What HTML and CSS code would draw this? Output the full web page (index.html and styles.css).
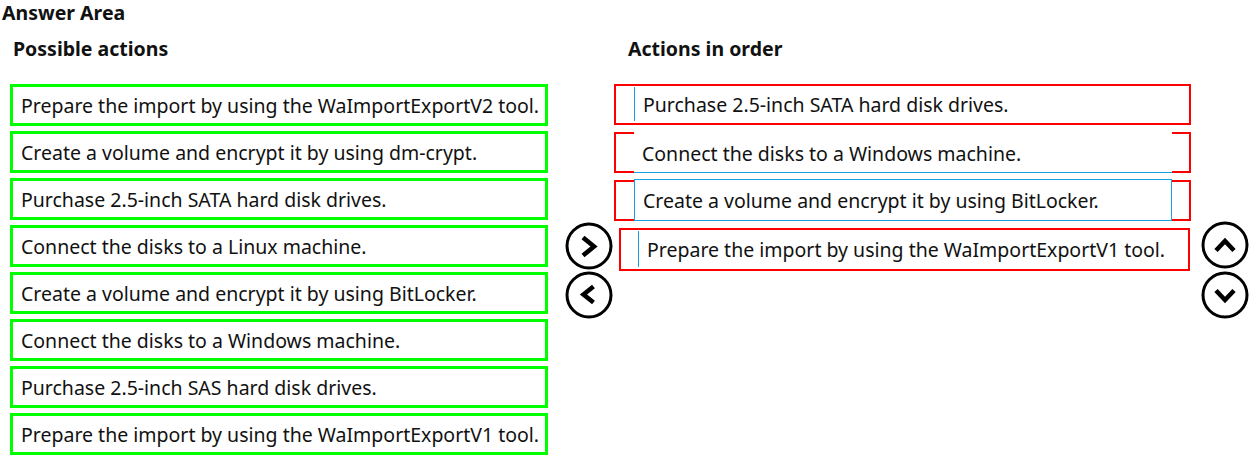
FILE: index.html
```html
<!DOCTYPE html>
<html>
<head>
<meta charset="utf-8">
<link rel="stylesheet" href="styles.css">
</head>
<body>
<h1 class="title">Answer Area</h1>
<div class="board">
  <h2 class="heading heading-left">Possible actions</h2>
  <div></div>
  <h2 class="heading heading-right">Actions in order</h2>
  <div></div>

  <div class="source-list">
    <div class="src">Prepare the import by using the WaImportExportV2 tool.</div>
    <div class="src">Create a volume and encrypt it by using dm-crypt.</div>
    <div class="src">Purchase 2.5-inch SATA hard disk drives.</div>
    <div class="src">Connect the disks to a Linux machine.</div>
    <div class="src">Create a volume and encrypt it by using BitLocker.</div>
    <div class="src">Connect the disks to a Windows machine.</div>
    <div class="src">Purchase 2.5-inch SAS hard disk drives.</div>
    <div class="src">Prepare the import by using the WaImportExportV1 tool.</div>
  </div>

  <div class="controls">
    <button class="circle-btn" aria-label="Move right">
      <svg width="48" height="48" viewBox="0 0 48 48"><circle cx="24" cy="24" r="22" fill="none" stroke="#000" stroke-width="3"/><polyline points="18,15.5 29,24.5 18,33.5" fill="none" stroke="#000" stroke-width="4.6"/></svg>
    </button>
    <button class="circle-btn" aria-label="Move left">
      <svg width="48" height="48" viewBox="0 0 48 48"><circle cx="24" cy="24" r="22" fill="none" stroke="#000" stroke-width="3"/><polyline points="28.5,15.5 18.5,23.5 28.5,31.5" fill="none" stroke="#000" stroke-width="4.6"/></svg>
    </button>
  </div>

  <div class="target-list">
    <div class="slot"><div class="item item-left">Purchase 2.5-inch SATA hard disk drives.</div></div>
    <div class="slot"><div class="item item-top">Connect the disks to a Windows machine.</div></div>
    <div class="slot"><div class="item item-box">Create a volume and encrypt it by using BitLocker.</div></div>
    <div class="slot slot-last"><div class="item item-left">Prepare the import by using the WaImportExportV1 tool.</div></div>
  </div>

  <div class="controls controls-right">
    <button class="circle-btn" aria-label="Move up">
      <svg width="48" height="48" viewBox="0 0 48 48"><circle cx="24" cy="24" r="22" fill="none" stroke="#000" stroke-width="3"/><polyline points="15,29.5 24,20 33,29.5" fill="none" stroke="#000" stroke-width="4.6"/></svg>
    </button>
    <button class="circle-btn" aria-label="Move down">
      <svg width="48" height="48" viewBox="0 0 48 48"><circle cx="24" cy="24" r="22" fill="none" stroke="#000" stroke-width="3"/><polyline points="15,19.5 24,29 33,19.5" fill="none" stroke="#000" stroke-width="4.6"/></svg>
    </button>
  </div>
</div>
</body>
</html>
```
FILE: styles.css
```css
* { box-sizing: border-box; }
body {
  margin: 0;
  background: #fff;
  color: #111;
  font-family: "Noto Sans", "Open Sans", sans-serif;
}
.title {
  margin: 0;
  padding-left: 2px;
  font-size: 19.5px;
  line-height: 25px;
  font-weight: 700;
  height: 20px;
}
.board {
  display: grid;
  grid-template-columns: 540px 64px 577px 56px;
  column-gap: 0;
  margin-left: 10px;
}
.heading {
  margin: 0;
  font-size: 19.5px;
  font-weight: 700;
  line-height: 24px;
  padding-top: 17px;
  height: 64px;
}
.heading-left { padding-left: 3px; }
.heading-right { padding-left: 14px; }
.source-list {
  display: flex;
  flex-direction: column;
  gap: 5px;
}
.src {
  height: 42px;
  border: 3px solid #00ff00;
  padding-left: 8px;
  display: flex;
  align-items: center;
  font-size: 19.5px;
  width: 538px;
  white-space: nowrap;
}
.controls {
  display: flex;
  flex-direction: column;
  align-items: center;
  padding-top: 138px;
  gap: 1px;
  padding-left: 14px;
}
.controls-right {
  padding-left: 10px;
  padding-top: 137px;
  align-items: flex-start;
  gap: 2px;
}
.circle-btn {
  width: 48px;
  height: 48px;
  padding: 0;
  margin: 0;
  border: 0;
  background: transparent;
  display: block;
}
.circle-btn svg { display: block; }
.target-list {
  display: flex;
  flex-direction: column;
  gap: 7px;
}
.slot {
  height: 41px;
  border: 2px solid #ff0000;
  padding: 0 17px 0 18px;
  display: flex;
}
.slot-last { height: 43px; margin-left: 5px; width: 571px; padding-left: 17px; }
.item {
  flex: 1;
  background: #fff;
  display: flex;
  align-items: center;
  font-size: 19.5px;
  padding-left: 8px;
  white-space: nowrap;
}
.item-left {
  border-left: 1px solid #1ba1e2;
  margin: 1px 0 2px;
}
.item-top {
  margin: -7px 0 -2px;
  border-bottom: 1px solid #1ba1e2;
  padding-top: 7px;
}
.item-box {
  margin: -3px 0 -2px;
  border: 1px solid #1ba1e2;
}
```
